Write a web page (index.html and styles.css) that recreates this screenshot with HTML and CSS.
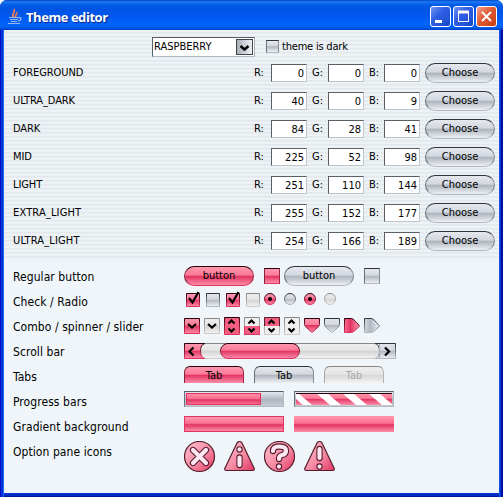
FILE: index.html
```
<!DOCTYPE html>
<html lang="en">
<head>
<meta charset="utf-8">
<title>Theme editor</title>
<link rel="stylesheet" href="styles.css">
</head>
<body>
<svg width="0" height="0" class="defs">
<defs>
<linearGradient id="pink" x2="0" y2="1"><stop offset="0" stop-color="#fe98b1"/><stop offset=".45" stop-color="#fb7995"/><stop offset=".5" stop-color="#e13462"/><stop offset="1" stop-color="#fe8eaa"/></linearGradient>
<linearGradient id="gray" x2="0" y2="1"><stop offset="0" stop-color="#e2e5ea"/><stop offset=".45" stop-color="#d3d7de"/><stop offset=".5" stop-color="#b2b8c2"/><stop offset="1" stop-color="#eef1f4"/></linearGradient>
<linearGradient id="pale" x2="0" y2="1"><stop offset="0" stop-color="#eee"/><stop offset=".45" stop-color="#e5e5e5"/><stop offset=".5" stop-color="#d2d2d2"/><stop offset="1" stop-color="#f3f3f3"/></linearGradient>
<linearGradient id="pinkx"><stop offset="0" stop-color="#fb6e90"/><stop offset=".4" stop-color="#e13462"/><stop offset="1" stop-color="#fe98b1"/></linearGradient>
<linearGradient id="grayx"><stop offset="0" stop-color="#d3d7de"/><stop offset=".4" stop-color="#b2b8c2"/><stop offset="1" stop-color="#eef1f4"/></linearGradient>
<linearGradient id="edgep" x2="0" y2="1"><stop offset="0" stop-color="#280009"/><stop offset="1" stop-color="#e13462"/></linearGradient>
<linearGradient id="edgeg" x2="0" y2="1"><stop offset="0" stop-color="#30343b"/><stop offset="1" stop-color="#b2b8c2"/></linearGradient>
<linearGradient id="edgel" x2="0" y2="1"><stop offset="0" stop-color="#858585"/><stop offset="1" stop-color="#ccc"/></linearGradient>
<linearGradient id="badge" x2="1" y2="1"><stop offset="0" stop-color="#ffc0cf"/><stop offset=".55" stop-color="#f58aa4"/><stop offset="1" stop-color="#e13462"/></linearGradient>
</defs>
</svg>
<div class="window">
<header class="titlebar">
<svg class="java" width="16" height="17" viewBox="0 0 16 17" fill="none"><path d="M7 9C3 6 9 5 7 1M9 9c-2-2 2-3 1-5" stroke="#f47b50" stroke-width="1.700"/><path d="M2 9.500h9M3 11.500h8M4 13.500h6M11 10c4-2 4 2 0 3M1 15.500h12" stroke="#9eb5e7" stroke-width="1.200"/></svg>
<h1>Theme editor</h1>
<div class="controls">
<span class="wbtn"><svg width="20" height="20"><path d="M4 14.500h7" stroke="#fff" stroke-width="3"/></svg></span>
<span class="wbtn"><svg width="20" height="20" fill="none" stroke="#fff"><path d="M4.500 4.500h10v10h-10z"/><path d="M4 5h11" stroke-width="3"/></svg></span>
<span class="wbtn close"><svg width="20" height="20"><path d="M5 5l9 9M14 5l-9 9" stroke="#fff" stroke-width="2"/></svg></span>
</div>
</header>
<main>
<section class="editor">
<div class="choose-theme">
<div class="select"><span>RASPBERRY</span><i class="arrow"><svg width="17" height="18"><path d="M4.500 7l4 3.500 4-3.500" fill="none" stroke="#000" stroke-width="2.500"/></svg></i></div>
<span class="sq gray check0"></span><span class="dark">theme is dark</span>
</div>
<div class="row"><span class="name">FOREGROUND</span><label>R:</label><b>0</b><label>G:</label><b>0</b><label>B:</label><b>0</b><button class="pill gray">Choose</button></div>
<div class="row"><span class="name">ULTRA_DARK</span><label>R:</label><b>40</b><label>G:</label><b>0</b><label>B:</label><b>9</b><button class="pill gray">Choose</button></div>
<div class="row"><span class="name">DARK</span><label>R:</label><b>84</b><label>G:</label><b>28</b><label>B:</label><b>41</b><button class="pill gray">Choose</button></div>
<div class="row"><span class="name">MID</span><label>R:</label><b>225</b><label>G:</label><b>52</b><label>B:</label><b>98</b><button class="pill gray">Choose</button></div>
<div class="row"><span class="name">LIGHT</span><label>R:</label><b>251</b><label>G:</label><b>110</b><label>B:</label><b>144</b><button class="pill gray">Choose</button></div>
<div class="row"><span class="name wide">EXTRA_LIGHT</span><label>R:</label><b>255</b><label>G:</label><b>152</b><label>B:</label><b>177</b><button class="pill gray">Choose</button></div>
<div class="row"><span class="name wide">ULTRA_LIGHT</span><label>R:</label><b>254</b><label>G:</label><b>166</b><label>B:</label><b>189</b><button class="pill gray">Choose</button></div>
</section>
<section class="preview">
<div class="item"><span class="caption">Regular button</span><div class="demo buttons"><button class="pill pink">button</button><span class="sq pink"></span><button class="pill gray">button</button><span class="sq gray"></span></div></div>
<div class="item"><span class="caption">Check / Radio</span>
<svg width="160" height="24" viewBox="184 289 160 24">
<g stroke="url(#edgep)"><path fill="url(#pink)" d="M186.500 293.500h13v13h-13z"/><path fill="url(#pink)" d="M226.500 293.500h13v13h-13z"/><circle cx="270" cy="299" r="5.500" fill="url(#pink)"/><circle cx="310" cy="299" r="5.500" fill="url(#pink)"/></g>
<path fill="url(#gray)" stroke="url(#edgeg)" d="M206.500 293.500h13v13h-13z"/><path fill="url(#pale)" stroke="url(#edgel)" d="M246.500 293.500h13v13h-13z"/>
<circle cx="290" cy="299" r="5.500" fill="url(#gray)" stroke="url(#edgeg)"/><circle cx="330" cy="299" r="5.500" fill="url(#pale)" stroke="url(#edgel)"/>
<circle cx="270" cy="299" r="2"/><circle cx="310" cy="299" r="2"/>
<path d="M189 298l3.500 4.500L198.500 292M229 298l3.500 4.500L238.500 292" fill="none" stroke="#000" stroke-width="2.200"/>
</svg></div>
<div class="item"><span class="caption">Combo / spinner / slider</span>
<svg width="200" height="24" viewBox="184 314 200 24">
<path d="M184.500 318.500h15v15h-15z" fill="url(#pink)" stroke="url(#edgep)"/>
<path d="M204.500 318.500h15v15h-15z" fill="url(#pale)" stroke="url(#edgel)"/>
<path d="M224.500 317.500h15v17h-15z" fill="#f35d80" stroke="url(#edgep)"/>
<path d="M244.500 317.500h15v17h-15zM264.500 317.500h15v17h-15zM284.500 317.500h15v17h-15z" fill="#f0f0ee" stroke="url(#edgel)"/>
<path d="M244 326h16v9h-16z" fill="#f35d80"/><path d="M264 317h16v9h-16z" fill="#f35d80"/><path d="M244.500 326v8.500h15V326" fill="none" stroke="#e13462"/><path d="M264.500 326v-8.500h15v8.500" fill="none" stroke="#54202d"/>
<path d="M188 324l4 3.500 4-3.500M208 324l4 3.500 4-3.500M228.500 323.500l3-3 3 3M228.500 328.500l3 3 3-3M248.500 323.500l3-3 3 3M248.500 328.500l3 3 3-3M268.500 323.500l3-3 3 3M268.500 328.500l3 3 3-3M288.500 323.500l3-3 3 3M288.500 328.500l3 3 3-3" fill="none" stroke="#000" stroke-width="2.200"/>
<path d="M304.500 318.500h15v6q0 2-7.500 8-7.500-6-7.500-8z" fill="url(#pink)" stroke="url(#edgep)"/>
<path d="M324.500 318.500h15v6q0 2-7.500 8-7.500-6-7.500-8z" fill="url(#gray)" stroke="url(#edgeg)"/>
<path d="M344.500 318.500h7q2 0 8 7.500-6 6.500-8 6.500h-7z" fill="url(#pinkx)" stroke="url(#edgep)"/>
<path d="M364.500 318.500h7q2 0 8 7.500-6 6.500-8 6.500h-7z" fill="url(#grayx)" stroke="url(#edgeg)"/>
</svg></div>
<div class="item"><span class="caption">Scroll bar</span>
<svg width="212" height="16">
<path d="M.5.5h211v15H.5z" fill="url(#pale)" stroke="url(#edgel)"/>
<path d="M.5.500H21C15 1 15 15 21 15.500H.5z" fill="url(#pink)" stroke="url(#edgep)"/><path d="M211.500.500H191C197 1 197 15 191 15.500h20.500z" fill="url(#gray)" stroke="url(#edgeg)"/><path d="M195.500 1v14" stroke="#a9afb9"/>
<rect x="36.500" y=".5" width="79" height="15" rx="7.500" fill="url(#pink)" stroke="url(#edgep)"/>
<path d="M9.500 4.500l-4 4 4 4M201 4.500l4 4-4 4" fill="none" stroke="#000" stroke-width="2.200"/>
</svg></div>
<div class="item"><span class="caption">Tabs</span><div class="demo tabs"><span class="tab pink">Tab</span><span class="tab gray">Tab</span><span class="tab pale">Tab</span></div></div>
<div class="item"><span class="caption">Progress bars</span><div class="demo tabs"><div class="progress"><i></i></div><div class="progress">
<svg width="96" height="12"><path d="M0 0h96v12H0z" fill="url(#pink)"/><path d="M-7 0h9l14 12H7zM20 0h11l14 12H34zM46 0h11l14 12H60zM72 0h11l14 12H86z" fill="#fff"/><path d="M0 .5h96" stroke="#280009"/></svg></div></div></div>
<div class="item"><span class="caption">Gradient background</span><div class="demo tabs"><i class="grad edge"></i><i class="grad"></i></div></div>
<div class="item icons"><span class="caption">Option pane icons</span>
<svg width="152" height="32" viewBox="184 441 152 32" stroke-linejoin="round" stroke-linecap="round">
<g fill="url(#badge)" stroke="#541c29" stroke-width="1.200"><circle cx="199.500" cy="456.500" r="15"/><circle cx="279.500" cy="456.500" r="15"/><path d="M237 443q2.500-3 5 0l12 25q1 2-1 2.500h-27q-2-.5-1-2.500z"/><path d="M317 443q2.500-3 5 0l12 25q1 2-1 2.500h-27q-2-.5-1-2.500z"/></g>
<path d="M193 450l13 13M206 450l-13 13M239.500 457.500v7.500M239.500 449.400v.1M273 451q0-4.500 6-4.500 7 0 7 4t-4 4.500q-3 .5-3 4M279 466.500v.1M319.500 449v9M319.500 466.500v.1" fill="none" stroke="#541c29" stroke-width="6.300"/>
<path d="M193 450l13 13M206 450l-13 13M239.500 457.500v7.500M239.500 449.400v.1M273 451q0-4.500 6-4.500 7 0 7 4t-4 4.500q-3 .5-3 4M279 466.500v.1M319.500 449v9M319.500 466.500v.1" fill="none" stroke="#ffe8f4" stroke-width="4.200"/>
</svg></div>
</section>
</main>
</div>
</body>
</html>
```
FILE: styles.css
```
* { box-sizing: border-box; }
body { margin: 0; font: 11px/14px "DejaVu Sans Condensed", "DejaVu Sans", sans-serif; color: #000; }
.defs { position: absolute; }
.window { width: 503px; height: 497px; background: linear-gradient(90deg, #0011c8 0 1px, #0831d9 1px 3px, #166aee 3px 4px, transparent 4px 499px, #0855dd 499px 500px, #0030e2 500px 501px, #0011a0 501px), linear-gradient(#0831d9 494px, #0030c8 495px, #00138c); border-radius: 7px 7px 0 0; display: flex; flex-direction: column; overflow: hidden; }
.titlebar { height: 30px; display: flex; align-items: center; padding: 2px 6px 0 7px; background: linear-gradient(#0648c4, #1c7bfa 2px, #0860e8 4px, #0054e3 9px, #0058ee 16px, #0364fb 24px, #0260f5 27px, #0040c8); }
.java { margin-top: 1px; }
h1 { margin: 1px auto 0 3px; font: bold 13px/16px "Open Sans", sans-serif; color: #fff; text-shadow: 1px 1px 1px #06258b; letter-spacing: -.45px; }
.controls { display: flex; gap: 2px; }
.wbtn { width: 21px; height: 21px; border: 1px solid #fff; border-radius: 3px; background: linear-gradient(135deg, #7497ed, #2f5ee5 40%, #2355d6 75%, #0641c0); overflow: hidden; }
.wbtn.close { background: linear-gradient(135deg, #f3a08c, #e05a35 45%, #cb3c10); }
.wbtn svg, .arrow svg { display: block; }
main { height: 463px; margin: 0 4px; background: #eff5f9; }
.editor { height: 230px; background: repeating-linear-gradient(#edf2f5 0 2px, #e2e8ed 2px 3px, #e7edf1 3px 4px); padding-top: 5px; }
.choose-theme { display: flex; height: 23px; align-items: center; padding-left: 148px; margin-bottom: 1px; }
.select { display: flex; width: 103px; height: 20px; border: 1px solid; border-color: #5b5f65 #aeb4bc #b4bac2 #5b5f65; background: #fff; justify-content: space-between; padding: 1px; line-height: 16px; }
.arrow { width: 17px; border: 1px solid #41454c; background: linear-gradient(90deg, #a9afb9, #eef1f4); }
.arrow svg { margin: -1px; }
.sq { width: 16px; height: 16px; }
.sq.check0 { width: 13px; height: 13px; margin: 0 3px 0 11px; }
.dark { letter-spacing: -.2px; }
.row { height: 28px; display: grid; grid-template-columns: 241px 17px 36px 21px 36px 20px 36px 5px 70px; padding-left: 9px; align-items: center; }
.name { letter-spacing: -.1px; }
.name.wide { letter-spacing: .15px; }
.row label { white-space: nowrap; }
.row label ~ label { padding-left: 5px; }
.row b { height: 18px; font-weight: normal; border: 1px solid; border-color: #5b5f65 #c0c5cc #c0c5cc #5b5f65; background: #fff; text-align: right; line-height: 17px; padding-right: 2px; }
.row button { grid-column: 9; }
.pill { width: 70px; height: 20px; border-radius: 10px; padding: 0; font: inherit; line-height: 18px; color: #000; }
.gray, .pink, .pale { border: 1px solid; }
.gray { border-color: #30343b #858b95 #b2b8c2 #6a7079; background: linear-gradient(#e5e9ee, #d3d7de 45%, #afb5bf 52%, #eef1f4); }
.pink { border-color: #280009 #a02645 #e13462 #84243c; background: linear-gradient(#fe98b1, #fb7995 45%, #e13462 52%, #fe8eaa); }
.pale { border-color: #858585 #b5b5b5 #ccc #a5a5a5; background: linear-gradient(#eee, #e5e5e5 45%, #d7d7d7 52%, #f3f3f3); color: #aaa; }
.preview { padding: 3.5px 0 0 9px; }
.item { height: 25px; display: flex; align-items: center; }
.caption { width: 171px; font-size: 12px; letter-spacing: .07px; padding-top: 2px; }
.demo { display: flex; align-items: center; }
.buttons { gap: 10px; }
.buttons .pill.gray { margin-left: -6px; }
.tabs { gap: 10px; align-self: flex-start; margin-top: 2.5px; }
.tab { width: 60px; height: 17px; border-bottom: 0; border-radius: 6px 6px 0 0; text-align: center; line-height: 17px; }
.progress { width: 100px; height: 16px; border: 1px solid; border-color: #5b5f65 #b2b8c2 #b2b8c2 #6a7079; padding: 1px; background: linear-gradient(#e5e9ee, #b0b6c0 55%, #c7ccd4); }
.progress svg { display: block; }
.progress i { display: block; width: 75px; height: 12px; border: 1px solid #e13462; background: linear-gradient(#fe8eaa, #fb6e90 45%, #e13462 58%, #fb6e90); }
.grad { width: 100px; height: 16px; background: linear-gradient(#fe98b1, #fb6e90 45%, #e13462 55%, #fe8eaa); }
.edge { border: 1px solid #e13462; }
.icons svg { align-self: flex-start; margin-top: 2.5px; }
```
